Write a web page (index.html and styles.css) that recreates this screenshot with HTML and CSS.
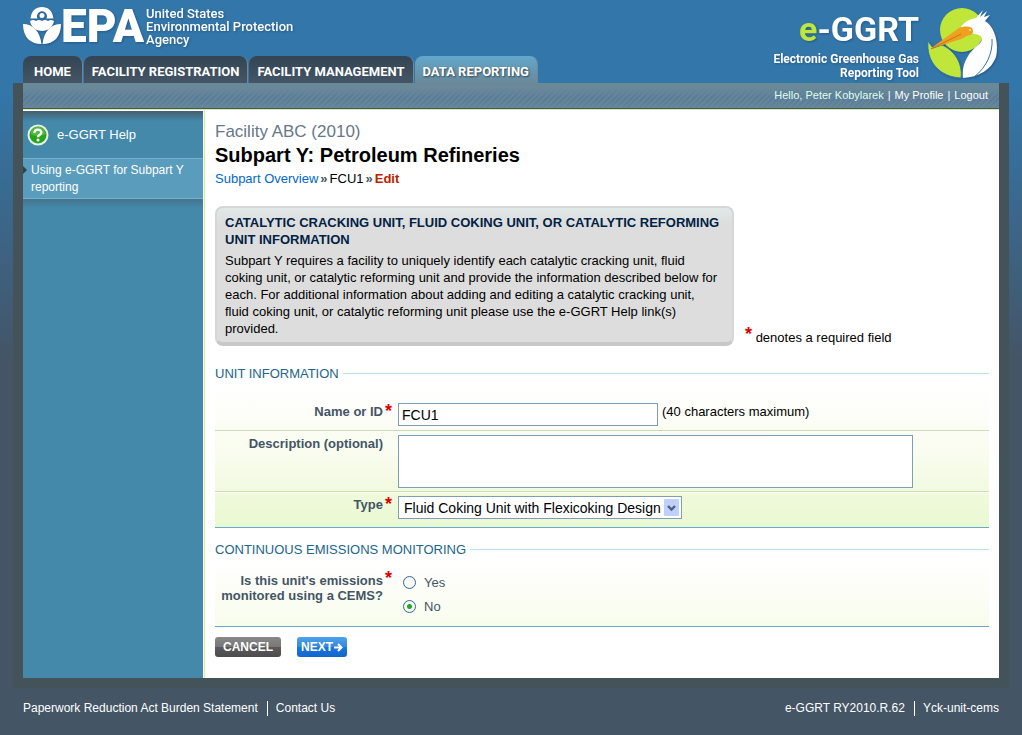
FILE: index.html
```
<!DOCTYPE html>
<html lang="en">
<head>
    <meta charset="UTF-8">
    <meta name="viewport" content="width=device-width, initial-scale=1.0">
    <title>e-GGRT | Subpart Y: Petroleum Refineries</title>
    <link rel="stylesheet" href="styles.css">
</head>
<body>
    <header class="header">
        <div class="header-left">
            <div class="epa">
                <svg class="epa-mark" width="38" height="38" viewBox="0 0 38 38">
                    <path fill="#fff" d="M7.500 11.500C8.500 3.500 13 0 19 0s10.500 3.500 11.500 11.500H23.500A5 5 0 1 0 14.500 11.500z"/>
                    <circle cx="19" cy="8.500" r="2.500" fill="#fff"/>
                    <path fill="#fff" d="M7 14q3-2 6 0q3-2 6 0q3-2 6 0q3-2 6 0C30 20 25 24 19 24S8 20 7 14z"/>
                    <path fill="#fff" d="M0 17c10 0 17 7 18.500 20C7 37 0 30 0 17zM38 17c-10 0-17 7-18.500 20C31 37 38 30 38 17z"/>
                </svg>
                <span class="epa-name">EPA</span>
                <span class="epa-full">United States<br>Environmental Protection<br>Agency</span>
            </div>
            <nav class="tabs">
                <a href="#">HOME</a>
                <a href="#">FACILITY REGISTRATION</a>
                <a href="#">FACILITY MANAGEMENT</a>
                <a href="#" class="active">DATA REPORTING</a>
            </nav>
        </div>
        <div class="ggrt">
            <div class="ggrt-text">
                <div class="ggrt-name"><span>e</span>-GGRT</div>
                <div class="ggrt-sub">Electronic Greenhouse Gas<br>Reporting Tool</div>
            </div>
            <svg class="ggrt-bird" width="72" height="74" viewBox="0 0 72 74">
                <circle cx="35" cy="23" r="22" fill="#bfe638"/>
                <path fill="#bfe638" stroke="#3377aa" stroke-width="1" d="M1 34L6 41L15 38C27 43 36 56 34 71C12 70-1 54 1 34z"/>
                <path fill="#fff" d="M33 22C36 15 43 12 49 11L56 3L53 10L60 4L57 10L63 8L58 14C68 20 72 36 69 50C64 63 52 70 36 71C34 57 42 45 51 38C57 33 56 28 48 27L33 24z"/>
                <path fill="none" stroke="#3377aa" stroke-width="1" d="M65 32C66 45 60 60 47 70"/>
                <path fill="#f0a020" d="M3 42L32 21C37 19 42 19 45 21C47 24 46 28 43 28C39 28 37 32 31 33z"/>
                <path fill="none" stroke="#c07810" d="M4 42L34 27"/>
                <circle cx="43" cy="23" r="1" fill="#fff1a0"/>
            </svg>
        </div>
    </header>

    <div class="frame">
        <div class="userbar">
            <span class="hello">Hello, Peter Kobylarek</span>
            <span>|</span>
            <a href="#">My Profile</a>
            <span>|</span>
            <a href="#">Logout</a>
        </div>
        <div class="page">
            <aside class="sidebar">
                <a href="#" class="help">
                    <svg width="22" height="22" viewBox="0 0 22 22">
                        <circle cx="11" cy="11" r="10.500" fill="#e8f0e8"/>
                        <circle cx="11" cy="11" r="8.500" fill="#2aa31c"/>
                        <path fill="#7cd160" d="M3.500 10a7.500 7.500 0 0 1 15 0q-7.500 4-15 0z" opacity=".5"/>
                        <path fill="none" stroke="#fff" stroke-width="2.400" d="M7.500 8.700C7.500 4.500 14.500 4.700 14.300 8.500C14.200 11 11 10.500 11 13.200"/>
                        <circle cx="11" cy="16" r="1.500" fill="#fff"/>
                    </svg>
                    e-GGRT Help
                </a>
                <a href="#" class="help-topic">Using e-GGRT for Subpart Y reporting</a>
                <div class="sidebar-shade"></div>
            </aside>

            <main class="content">
                <h2>Facility ABC (2010)</h2>
                <h1>Subpart Y: Petroleum Refineries</h1>
                <div class="crumbs">
                    <a href="#">Subpart Overview</a>
                    <b>»</b>
                    <span>FCU1</span>
                    <b>»</b>
                    <strong>Edit</strong>
                </div>

                <div class="intro">
                    <div class="info">
                        <h3>CATALYTIC CRACKING UNIT, FLUID COKING UNIT, OR CATALYTIC REFORMING UNIT INFORMATION</h3>
                        <p>Subpart Y requires a facility to uniquely identify each catalytic cracking unit, fluid<br>
                        coking unit, or catalytic reforming unit and provide the information described below for<br>
                        each. For additional information about adding and editing a catalytic cracking unit,<br>
                        fluid coking unit, or catalytic reforming unit please use the e-GGRT Help link(s)<br>
                        provided.</p>
                    </div>
                    <div class="required-note"><span class="star">*</span> denotes a required field</div>
                </div>

                <form>
                    <h4>UNIT INFORMATION</h4>
                    <div class="fields unit">
                        <div class="row">
                            <label for="unit-name">Name or ID</label>
                            <span class="star">*</span>
                            <div class="control">
                                <input type="text" id="unit-name" maxlength="40" value="FCU1">
                                <span class="hint">(40 characters maximum)</span>
                            </div>
                        </div>
                        <div class="row">
                            <label for="unit-desc">Description (optional)</label>
                            <span class="star"></span>
                            <div class="control"><textarea id="unit-desc"></textarea></div>
                        </div>
                        <div class="row">
                            <label for="unit-type">Type</label>
                            <span class="star">*</span>
                            <div class="control">
                                <div class="select">
                                    <select id="unit-type">
                                        <option>Fluid Coking Unit with Flexicoking Design</option>
                                    </select>
                                    <svg class="select-arrow" width="15" height="17" viewBox="0 0 15 17">
                                        <rect width="15" height="17" rx="1" fill="#bfd0fa"/>
                                        <path fill="none" stroke="#4d6185" stroke-width="2.400" d="M4 7l3.500 3.500L11 7"/>
                                    </svg>
                                </div>
                            </div>
                        </div>
                    </div>

                    <h4>CONTINUOUS EMISSIONS MONITORING</h4>
                    <div class="fields cems">
                        <div class="row" role="radiogroup" aria-labelledby="cems-label">
                            <span class="label" id="cems-label">Is this unit's emissions monitored using a CEMS?</span>
                            <span class="star">*</span>
                            <div class="radios">
                                <label><input type="radio" name="cems" value="yes"> Yes</label>
                                <label><input type="radio" name="cems" value="no" checked> No</label>
                            </div>
                        </div>
                    </div>

                    <div class="buttons">
                        <button type="button" class="cancel">CANCEL</button>
                        <button type="submit" class="next">NEXT
                            <svg width="9" height="9" viewBox="0 0 9 9">
                                <path fill="none" stroke="#fff" stroke-width="2" d="M0 4.500h7M4 1l3.500 3.500L4 8"/>
                            </svg>
                        </button>
                    </div>
                </form>
            </main>
        </div>
    </div>

    <footer class="footer">
        <div>
            <a href="#">Paperwork Reduction Act Burden Statement</a>
            <a href="#">Contact Us</a>
        </div>
        <div>
            <span>e-GGRT RY2010.R.62</span>
            <span>Yck-unit-cems</span>
        </div>
    </footer>
</body>
</html>
```
FILE: styles.css
```
* {
    box-sizing: border-box;
}
body {
    margin: 0;
    min-height: 100vh;
    padding: 0 13px;
    font-family: "Liberation Sans", Arial, sans-serif;
    font-size: 13px;
    line-height: 17px;
    color: #000;
    background: #445566 linear-gradient(#3377aa 0, #3377aa 85px, #445566 360px) no-repeat;
}
h1, h2, h3, h4, p {
    margin: 0;
}
a {
    text-decoration: none;
}

/* header */
.header {
    display: flex;
    justify-content: space-between;
    height: 83px;
    padding: 0 10px;
    color: #fff;
    font-family: Roboto, Arial, sans-serif;
}
.header-left {
    display: flex;
    flex-direction: column;
    justify-content: space-between;
}
.epa {
    display: flex;
    align-items: flex-start;
    padding-top: 7px;
    filter: drop-shadow(1px 1px 1px #25588a);
}
.epa-name {
    font-size: 46px;
    line-height: 38px;
    font-weight: 900;
    margin-right: 2px;
}
.epa-full {
    font-size: 13px;
    line-height: 13px;
    font-weight: 500;
}
.tabs {
    display: flex;
    gap: 1px;
}
.tabs a {
    height: 27px;
    padding: 0 8px;
    line-height: 32px;
    font-size: 13px;
    font-weight: bold;
    color: #fff;
    border-radius: 8px 8px 0 0;
    background: linear-gradient(#334455, #445566);
    border-right: 1px solid #6f8798;
}
.tabs a:first-child {
    padding: 0 11px;
}
.tabs a.active {
    background: linear-gradient(#62a8cc, #698999);
    text-shadow: 1px 1px 2px #334455;
}
.ggrt {
    display: flex;
    padding-top: 7px;
    filter: drop-shadow(1px 1px 1px #25588a);
}
.ggrt-text {
    text-align: right;
    margin-right: 8px;
}
.ggrt-name {
    font-size: 34px;
    line-height: 45px;
    font-weight: bold;
}
.ggrt-name span {
    color: #bfe638;
}
.ggrt-sub {
    font-size: 12px;
    line-height: 14px;
    font-weight: bold;
}

/* page frame */
.frame {
    padding: 0 10px 10px;
    background: #445259;
}
.userbar {
    display: flex;
    justify-content: flex-end;
    gap: 4px;
    height: 26px;
    padding: 0 11px;
    line-height: 25px;
    font-size: 11px;
    color: #fff;
    border-bottom: 1px solid #445566;
    background:
        linear-gradient(#698999 20%, rgba(105, 137, 153, .2) 60%, rgba(105, 137, 153, .7)),
        repeating-linear-gradient(135deg, #557799 0 2px, #62839a 2px 4px);
}
.userbar a {
    color: #fff;
}
.userbar .hello {
    color: #ddffee;
}
.page {
    display: flex;
    background: #fff;
    border-top: 1px solid #d5ee99;
}
.sidebar {
    flex: 0 0 180px;
    margin-top: 1px;
    background: linear-gradient(#445f6c, #4488aa 10px);
}
.sidebar a {
    color: #fff;
}
.help {
    display: flex;
    align-items: center;
    gap: 8px;
    height: 47px;
    padding-left: 4px;
}
.help-topic {
    display: block;
    position: relative;
    height: 41px;
    padding: 3px 8px;
    font-size: 12px;
    background: #5a9cbc;
    border-top: 1px solid #77b0cc;
    border-bottom: 1px solid #77b0cc;
}
.help-topic::before {
    content: "";
    position: absolute;
    left: 0;
    top: 7px;
    border: 4px solid transparent;
    border-left-color: #2b4452;
    border-right: 0;
}
.sidebar-shade {
    height: 9px;
    background: linear-gradient(#45758d, #4488aa);
}

/* content */
.content {
    flex: 1;
    margin-left: 1px;
    padding: 13px 10px 21px;
    border-left: 1px solid #d5ee99;
}
h2 {
    font-size: 17px;
    line-height: 18px;
    font-weight: normal;
    color: #667788;
}
h1 {
    font-size: 20px;
    line-height: 28px;
}
.crumbs {
    display: flex;
    gap: 2px;
    line-height: 19px;
}
.crumbs a {
    color: #0066cc;
}
.crumbs b {
    color: #445566;
}
.crumbs strong {
    color: #bb2200;
}
.intro {
    display: flex;
    align-items: flex-end;
    gap: 11px;
    margin-top: 18px;
}
.info {
    width: 519px;
    padding: 6px 8px 5px;
    border: 2px solid #d6d6d6;
    border-bottom: 4px solid #c8c8c8;
    border-radius: 8px;
    background: linear-gradient(#e1e9e8, #dddddd 16px);
}
.info h3 {
    font-size: 13px;
    color: #002244;
    margin-bottom: 4px;
}
.star {
    color: #dd0000;
    font-size: 18px;
    font-weight: bold;
}
.required-note .star {
    line-height: 10px;
    vertical-align: 2px;
}
h4 {
    display: flex;
    align-items: center;
    gap: 4px;
    font-weight: normal;
    font-size: 13px;
    color: #226688;
}
h4::after {
    content: "";
    flex: 1;
    border-top: 1px solid #bbddee;
}
form {
    margin-top: 19px;
}
.fields {
    border-bottom: 1px solid #66aacc;
}
.unit {
    margin-top: 3px;
    margin-bottom: 13px;
    padding-top: 14px;
    background: linear-gradient(#ffffff, #f9fcee 70px, #eaf8d2);
}
.cems {
    margin-top: 4px;
    padding: 4px 0;
    background: linear-gradient(#ffffff, #f8fcec);
}
.row {
    display: grid;
    grid-template-columns: 168px 15px 1fr;
    padding: 4px 0 3px;
}
.row:first-child {
    padding-bottom: 4px;
}
.unit .row + .row {
    border-top: 1px solid #ccddbb;
}
.unit .row:last-child {
    background: linear-gradient(#f0fadc, #eaf8d2);
    box-shadow: inset 0 1px #fff;
}
.row > label, .label {
    text-align: right;
    font-weight: bold;
    color: #445566;
}
.label {
    padding-top: 3px;
    line-height: 15px;
}
.row .star {
    padding-left: 2px;
    line-height: 17px;
}
.control {
    display: flex;
    gap: 4px;
}
input[type="text"], textarea, select {
    font-family: inherit;
    font-size: 14px;
    color: #000;
    border: 1px solid #7f9db9;
    border-radius: 0;
    background: #fff;
    outline: none;
}
input[type="text"] {
    width: 260px;
    height: 23px;
    padding: 1px 3px;
}
textarea {
    display: block;
    width: 515px;
    height: 53px;
    resize: none;
}
.select {
    position: relative;
    width: 284px;
    margin-bottom: 5px;
}
select {
    appearance: none;
    display: block;
    width: 100%;
    height: 23px;
    padding: 0 5px;
}
.select-arrow {
    position: absolute;
    right: 3px;
    top: 3px;
    pointer-events: none;
}
.radios {
    padding-left: 5px;
    color: #445566;
}
.radios label {
    display: flex;
    align-items: center;
    gap: 8px;
    height: 24px;
}
.radios input {
    appearance: none;
    width: 13px;
    height: 13px;
    margin: 0;
    border: 1px solid #336699;
    border-radius: 50%;
    background: #f8f8f5;
}
.radios input:checked {
    background: radial-gradient(#22aa22 0 2px, #f8f8f5 3px);
}
.buttons {
    display: flex;
    gap: 16px;
    margin-top: 10px;
}
button {
    height: 20px;
    padding: 0;
    border: 0;
    border-radius: 3px;
    font-family: inherit;
    font-size: 12px;
    font-weight: bold;
    color: #fff;
    cursor: pointer;
}
.cancel {
    width: 66px;
    background: linear-gradient(#888888, #777777 50%, #5a5a5a 50%, #4c4c4c);
}
.next {
    display: flex;
    align-items: center;
    justify-content: center;
    gap: 1px;
    width: 50px;
    background: linear-gradient(#4ea2ea, #3388dd 50%, #1a77d8 50%, #1166cc);
}

/* footer */
.footer {
    display: flex;
    justify-content: space-between;
    padding: 13px 10px;
    font-size: 12px;
    line-height: 15px;
    color: #fff;
}
.footer div {
    display: flex;
}
.footer a {
    color: #fff;
}
.footer div > * + * {
    margin-left: 9px;
    padding-left: 8px;
    border-left: 1px solid #fff;
}
```
